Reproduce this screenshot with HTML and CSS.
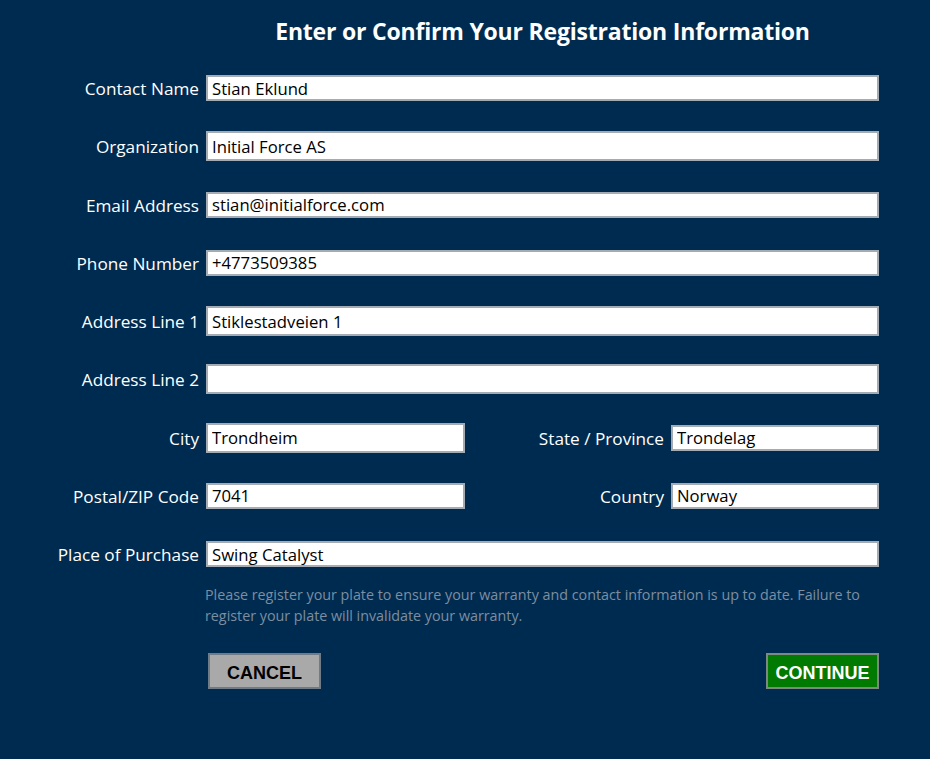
FILE: index.html
```html
<!DOCTYPE html>
<html lang="en">
<head>
    <meta charset="UTF-8">
    <meta name="viewport" content="width=device-width, initial-scale=1.0">
    <title>Registration</title>
    <link rel="stylesheet" href="styles.css">
</head>
<body>
    <div class="page">
        <h1 class="title">Enter or Confirm Your Registration Information</h1>

        <div class="row">
            <label class="label">Contact Name</label>
            <input class="field" type="text" value="Stian Eklund">
        </div>
        <div class="row">
            <label class="label">Organization</label>
            <input class="field tall" type="text" value="Initial Force AS">
        </div>
        <div class="row">
            <label class="label">Email Address</label>
            <input class="field" type="text" value="stian@initialforce.com">
        </div>
        <div class="row">
            <label class="label">Phone Number</label>
            <input class="field" type="text" value="+4773509385">
        </div>
        <div class="row">
            <label class="label">Address Line 1</label>
            <input class="field tall" type="text" value="Stiklestadveien 1">
        </div>
        <div class="row">
            <label class="label">Address Line 2</label>
            <input class="field tall" type="text" value="">
        </div>
        <div class="row">
            <label class="label">City</label>
            <input class="field half tall" type="text" value="Trondheim">
            <label class="label side">State / Province</label>
            <input class="field small" type="text" value="Trondelag">
        </div>
        <div class="row">
            <label class="label">Postal/ZIP Code</label>
            <input class="field half" type="text" value="7041">
            <label class="label side">Country</label>
            <input class="field small" type="text" value="Norway">
        </div>
        <div class="row">
            <label class="label">Place of Purchase</label>
            <input class="field" type="text" value="Swing Catalyst">
        </div>

        <p class="note">Please register your plate to ensure your warranty and contact information is up to date. Failure to register your plate will invalidate your warranty.</p>

        <div class="actions">
            <button class="btn cancel">CANCEL</button>
            <button class="btn continue">CONTINUE</button>
        </div>
    </div>
</body>
</html>
```

FILE: styles.css
```css
body { margin: 0; background: #002b50; font-family: "Open Sans", "Noto Sans", sans-serif; color: white; }
.page { width: 879px; height: 759px; }
.title { margin: 0; height: 59px; padding-left: 206px; text-align: center; font-size: 23px; font-weight: bold; line-height: 62px; letter-spacing: -0.2px; }
.row { display: flex; align-items: center; height: 58.25px; }
.label { width: 199px; padding-right: 7px; padding-top: 1px; text-align: right; font-size: 17.2px; white-space: nowrap; flex-shrink: 0; }
.label.side { width: auto; flex: 1; }
.field { flex: 1; box-sizing: border-box; height: 26px; margin: 0; padding: 0 4px; border: 2px solid #a5abb3; background: white; color: black; font-family: inherit; font-size: 16.7px; outline: none; min-width: 0; }
.field.tall { height: 30px; }
.field.half { flex: none; width: 259px; }
.field.small { flex: none; width: 208px; }
.note { margin: 1px 0 0 205px; font-size: 14.3px; line-height: 21px; color: #7d8ea1; }
.actions { display: flex; justify-content: space-between; margin: 27px 0 0 208px; }
.btn { width: 113px; height: 36px; font-family: "Liberation Sans", Arial, sans-serif; font-size: 18px; font-weight: bold; border: 2px solid #6f7b86; padding: 0; line-height: 36px; }
.cancel { background: #a9a9a9; color: black; }
.continue { background: #007a00; color: white; border-color: #7a8a80; }
```
